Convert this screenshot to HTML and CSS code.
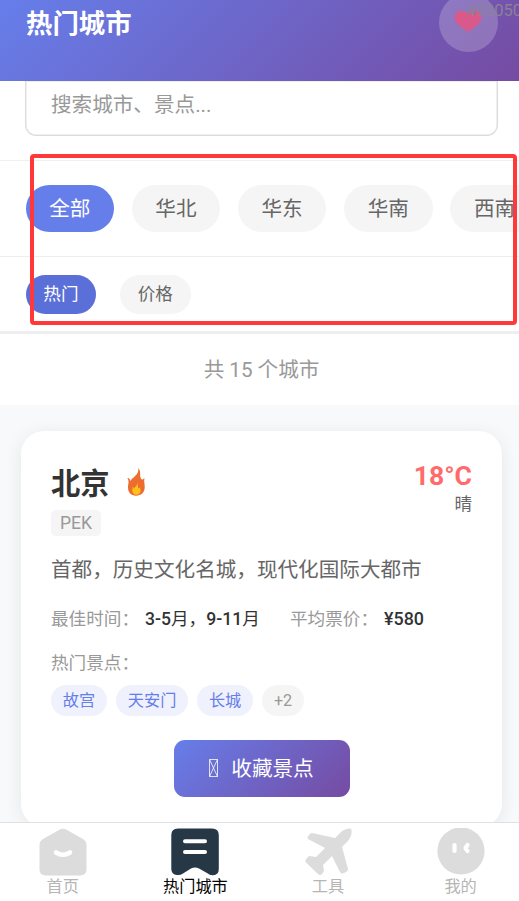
FILE: index.html
```html
<!DOCTYPE html>
<html lang="zh-CN">
<head>
<meta charset="utf-8">
<title>热门城市</title>
<link rel="stylesheet" href="styles.css">
</head>
<body>
<div class="page">
  <header class="header">
    <h1 class="title">热门城市</h1>
    <div class="fav">
      <svg width="28" height="24" viewBox="0 0 28 24"><path d="M14 22.500C11.5 18.500 .5 15 .5 7.700C.5 3.500 3.500.7 7.200.7C10.600.7 13 2 14 4C15 2 17.400.7 20.800.7C24.500.7 27.500 3.500 27.500 7.700C27.500 15 16.500 18.500 14 22.500Z" fill="#d95a8a"/></svg>
    </div>
    <span class="watermark">493050</span>
  </header>
  <section class="search"><div class="search-box">搜索城市、景点...</div></section>
  <nav class="regions">
    <span class="chip active">全部</span><span class="chip">华北</span><span class="chip">华东</span><span class="chip">华南</span><span class="chip">西南</span>
  </nav>
  <nav class="sorts"><span class="sort active">热门</span><span class="sort">价格</span></nav>
  <div class="count">共 15 个城市</div>
  <main class="list">
    <article class="card">
      <div class="card-head">
        <div>
          <div class="name-row"><h2 class="name">北京</h2>
            <svg class="fire" width="18" height="28" viewBox="0 0 18 28"><path d="M11.300 0C14.500 4.500 12.400 7.500 13.700 10C14.400 11.400 15.200 11.900 15.700 11.500C16.100 11.200 16 10.500 17.800 10.500C16.500 12 17.700 14.500 17.700 19C17.700 24.500 14 27.700 9 27.700C4.200 27.700 1 24.500 1 19.500C1 15.500 2.700 14 .3 10.100C2.500 10 3.100 11.600 3.200 13.300C4.200 9.500 12.500 7.500 11.300 0Z" fill="#ed6c30"/><path d="M10 14.500C11.500 17.500 10.600 19.500 11.500 20.300C12.200 20.800 12.500 19.500 13.300 19.200C12.700 20.500 13.700 21.200 13.600 22.800C13.400 25.300 11.700 26.700 9.500 26.700C7 26.700 5.300 25.200 5.300 22.800C5.300 21 6 20.500 5.300 19C6.400 19 6.800 20 7 20.700C8 18.500 10.600 18 10 14.500Z" fill="#fcc21b"/></svg>
          </div>
          <span class="code">PEK</span>
        </div>
        <div class="weather"><div class="temp">18°C</div><div class="sky">晴</div></div>
      </div>
      <p class="desc">首都，历史文化名城，现代化国际大都市</p>
      <div class="facts">
        <span class="label">最佳时间：</span><span class="value season">3-5<span class="han">月，</span>9-11<span class="han">月</span></span>
        <span class="label">平均票价：</span><span class="value price">¥580</span>
      </div>
      <div class="spots-label">热门景点：</div>
      <div class="spots"><span class="tag">故宫</span><span class="tag">天安门</span><span class="tag">长城</span><span class="tag more">+2</span></div>
      <div class="action"><svg width="9" height="18" viewBox="0 0 9 18" fill="none" stroke="#fff" stroke-width=".8"><path d="M.5.5h8v17h-8zM.5.5l8 17M8.500.5l-8 17"/></svg><span>收藏景点</span></div>
    </article>
  </main>
  <footer class="tabbar">
    <div class="tab"><svg width="48" height="48" viewBox="0 0 48 48"><path d="M20 2Q24-.3 28 2L44 11Q47.500 13 47.500 17V41Q47.500 47.500 41 47.500H7Q.5 47.500.5 41V17Q.5 13 4 11Z" fill="#dcdcdc"/><path d="M17 24.500Q24 29 31 24.500" fill="none" stroke="#fff" stroke-width="4.600" stroke-linecap="round"/></svg><span>首页</span></div>
    <div class="tab current"><svg width="48" height="48" viewBox="0 0 48 48"><path d="M7 .5H41Q47.800.5 47.800 7V41Q47.800 47 42 47.300Q39 47.500 36 45L28 40.500Q24 38.500 20 40.500L12 45.500Q9 47.500 6 47Q.3 46.500.3 41V7Q.3.5 7 .5Z" fill="#263746"/><path d="M14 13.200H34M14 24H34" fill="none" stroke="#fff" stroke-width="4" stroke-linecap="round"/></svg><span>热门城市</span></div>
    <div class="tab"><svg width="48" height="48" viewBox="0 0 48 48"><path d="M8 5L31 10L37 4Q41 .5 46 .5Q48 .5 47.500 5Q47 10 42 15L38 19L44 41Q44.300 43 42 44L39 45.500Q37 46 36 44L28 28L19 37L20 43L18 46Q16 48 14 46L1.500 34Q1 32 2.500 30.500L5 28L12 29L21 20L4 11Q3 10 4 8.500L6 6Q7 5 8 5Z" fill="#dcdcdc"/></svg><span>工具</span></div>
    <div class="tab"><svg width="48" height="48" viewBox="0 0 48 48"><circle cx="24" cy="23" r="23.600" fill="#dcdcdc"/><path d="M17.500 17V23M30.500 17L28.500 20L30.500 23" fill="none" stroke="#fff" stroke-width="4.200" stroke-linecap="round" stroke-linejoin="round"/></svg><span>我的</span></div>
  </footer>
  <div class="highlight"></div>
</div>
</body>
</html>
```
FILE: styles.css
```css
* { box-sizing: border-box; }
body { margin: 0; font-family: Roboto, "Noto Sans CJK SC", sans-serif; color: #333; }
h1, h2, p { margin: 0; }
svg { display: block; flex: none; }
.page { position: relative; width: 519px; height: 901px; overflow: hidden; display: flex; flex-direction: column; background: #f8f9fb; }
.header { position: relative; flex: none; height: 81px; padding: 0 21.500px 0 26px; display: flex; justify-content: space-between; align-items: flex-start; background: linear-gradient(135deg, #667eea, #764ba2); overflow: hidden; }
.title { color: #fff; font-size: 26.400px; line-height: 38px; padding-top: 5px; font-weight: 700; }
.fav { width: 59px; height: 59px; margin-top: -7.500px; border-radius: 50%; background: rgba(255,255,255,.2); display: flex; align-items: center; justify-content: center; }
.watermark { position: absolute; left: 466.500px; top: 0; font-size: 16.500px; line-height: 21px; color: #8a8297; }
.search { flex: none; height: 80px; padding: 0 21.500px 0 25px; background: #fff; border-bottom: 1px solid #f0f0f0; }
.search-box { height: 55px; border: 1px solid #dcdcdc; border-top: 0; border-radius: 0 0 11px 11px; padding-left: 25px; font-size: 20.600px; line-height: 48px; color: #999; box-shadow: inset 0 0 0 .5px #e0e0e0; }
.regions { flex: none; height: 96px; padding: 24px 0 0 25.500px; display: flex; gap: 17.700px; background: #fff; border-bottom: 1px solid #eee; overflow: hidden; }
.chip { flex: none; width: 88.500px; height: 47.300px; border-radius: 24px; text-align: center; font-size: 20.600px; line-height: 48px; background: #f5f5f5; color: #666; }
.chip.active { background: #667eea; color: #fff; }
.sorts { flex: none; height: 77px; padding: 18px 0 0 25.500px; display: flex; gap: 23.600px; background: #fff; border-bottom: 3px solid #eee; }
.sort { width: 70.800px; height: 39px; border-radius: 20px; text-align: center; font-size: 17.600px; line-height: 38px; background: #f5f5f5; color: #666; }
.sort.active { background: #5a6fd8; color: #fff; }
.count { flex: none; height: 71px; background: #fff; color: #999; text-align: center; font-size: 20.600px; line-height: 73px; padding-left: 4px; }
.list { flex: 1; min-height: 0; padding: 25.500px 17px 0 21px; overflow: hidden; }
.card { height: 396px; border-radius: 23px; background: #fff; padding: 30px; box-shadow: 0 3px 18px rgba(0,0,0,.08); }
.card-head { display: flex; justify-content: space-between; height: 77px; }
.name-row { display: flex; align-items: center; height: 44px; gap: 17px; }
.name { font-size: 29.300px; line-height: 44px; font-weight: 700; padding-top: 2px; }
.fire { margin-top: -2px; }
.code { display: block; width: 50px; height: 26px; margin-top: 5px; background: #f5f5f5; border-radius: 5px; color: #999; font-size: 17.600px; line-height: 26px; text-align: center; }
.weather { text-align: right; }
.temp { color: #ff6b6b; font-weight: 700; font-size: 26.600px; line-height: 29px; }
.sky { color: #666; font-size: 17.600px; line-height: 28px; }
.desc { margin-top: 16px; font-size: 20.600px; line-height: 32px; color: #666; white-space: nowrap; }
.facts { display: flex; height: 28px; margin-top: 18px; font-size: 17.600px; line-height: 30px; white-space: nowrap; }
.label, .spots-label { color: #999; }
.label { width: 94px; }
.value { font-weight: 500; color: #333; }
.han { font-weight: 400; }
.season { width: 145px; }
.price { font-size: 17.900px; line-height: 29px; }
.spots-label { font-size: 17.600px; line-height: 28px; margin-top: 17px; }
.spots { display: flex; gap: 9px; margin-top: 8px; }
.tag { height: 31px; padding: 0 11.800px; border-radius: 16px; background: #eff1fd; color: #667eea; font-size: 16.200px; line-height: 31px; }
.more { background: #f5f5f5; color: #999; }
.action { width: 176px; height: 57px; margin: 24px auto 0; border-radius: 11px; display: flex; align-items: center; justify-content: center; gap: 13px; background: linear-gradient(135deg, #667eea, #764ba2); color: #fff; font-size: 20.600px; line-height: 30px; }
.action span { padding-top: 1px; }
.tabbar { position: relative; flex: none; height: 79px; display: grid; grid-template-columns: repeat(4, 132.600px); margin-left: -3.500px; width: 531px; background: #fff; border-top: 1px solid #e0e0e0; }
.tab { display: flex; flex-direction: column; align-items: center; padding-top: 4.500px; color: #b5b5b5; font-size: 16.200px; line-height: 22px; }
.current { color: #000; }
.highlight { position: absolute; left: 30px; top: 154px; width: 487px; height: 171px; border: 4px solid #ff383a; border-radius: 4px; }
```
